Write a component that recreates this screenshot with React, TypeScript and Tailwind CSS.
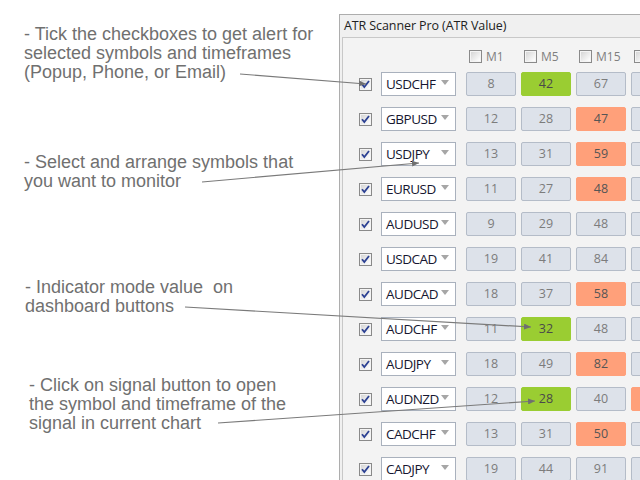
import { Fragment } from 'react';

type Tone = 'gray' | 'green' | 'salmon';

interface Row {
  symbol: string;
  cells: [number | null, Tone][];
}

// last column is cut off by the window edge, only its colour shows
const rows: Row[] = [
  { symbol: 'USDCHF', cells: [[8, 'gray'], [42, 'green'], [67, 'gray'], [null, 'gray']] },
  { symbol: 'GBPUSD', cells: [[12, 'gray'], [28, 'gray'], [47, 'salmon'], [null, 'gray']] },
  { symbol: 'USDJPY', cells: [[13, 'gray'], [31, 'gray'], [59, 'salmon'], [null, 'gray']] },
  { symbol: 'EURUSD', cells: [[11, 'gray'], [27, 'gray'], [48, 'salmon'], [null, 'gray']] },
  { symbol: 'AUDUSD', cells: [[9, 'gray'], [29, 'gray'], [48, 'gray'], [null, 'gray']] },
  { symbol: 'USDCAD', cells: [[19, 'gray'], [41, 'gray'], [84, 'gray'], [null, 'gray']] },
  { symbol: 'AUDCAD', cells: [[18, 'gray'], [37, 'gray'], [58, 'salmon'], [null, 'gray']] },
  { symbol: 'AUDCHF', cells: [[11, 'gray'], [32, 'green'], [48, 'gray'], [null, 'gray']] },
  { symbol: 'AUDJPY', cells: [[18, 'gray'], [49, 'gray'], [82, 'salmon'], [null, 'gray']] },
  { symbol: 'AUDNZD', cells: [[12, 'gray'], [28, 'green'], [40, 'gray'], [null, 'salmon']] },
  { symbol: 'CADCHF', cells: [[13, 'gray'], [31, 'gray'], [50, 'salmon'], [null, 'gray']] },
  { symbol: 'CADJPY', cells: [[19, 'gray'], [44, 'gray'], [91, 'gray'], [null, 'gray']] },
];

const toneClass: Record<Tone, string> = {
  gray: 'bg-[#dde2ea] border-[#b4bcc8] text-[#7c7c7c]',
  green: 'bg-[#9acd32] border-[#9acd32] text-[#4a4a4a]',
  salmon: 'bg-[#ffa07a] border-[#ffa07a] text-[#555555]',
};

function CheckBox({ checked }: { checked: boolean }) {
  return (
    <svg width="13" height="13" viewBox="0 0 13 13" className="shrink-0">
      <defs>
        <linearGradient id="cbg" x1="0" y1="0" x2="1" y2="1">
          <stop offset="0" stopColor="#d6d6d6" />
          <stop offset="1" stopColor="#ffffff" />
        </linearGradient>
      </defs>
      <rect x="0.5" y="0.5" width="12" height="12" fill="#f4f4f4" stroke="#8a8a8a" />
      <rect x="2" y="2" width="9" height="9" fill="url(#cbg)" />
      {checked && (
        <path d="M3 6.2 L5.3 9 L10 3" fill="none" stroke="#2c4193" strokeWidth="1.8" />
      )}
    </svg>
  );
}

function Annotation({ lines, className }: { lines: string[]; className: string }) {
  return (
    <div className={className}>
      {lines.map((l) => (
        <div key={l} className="whitespace-pre">{l}</div>
      ))}
    </div>
  );
}

export default function App() {
  const arrows = [
    [240, 74, 366, 84],
    [202, 182, 419, 163],
    [185, 307, 531, 327],
    [218, 423, 535, 401],
  ];

  return (
    <div className="relative w-[640px] h-[480px] overflow-hidden bg-white flex">
      {/* callouts */}
      <div className="w-[339px] shrink-0 pt-[25px] pl-[24px] text-[18px] leading-[19px] text-[#707070] font-['Liberation_Sans',Arial,sans-serif]">
        <Annotation
          lines={['- Tick the checkboxes to get alert for', 'selected symbols and timeframes', '(Popup, Phone, or Email)']}
          className=""
        />
        <Annotation lines={['- Select and arrange symbols that', 'you want to monitor']} className="mt-[71px]" />
        <Annotation lines={['- Indicator mode value  on', 'dashboard buttons']} className="mt-[87px] pl-[1px]" />
        <Annotation
          lines={['- Click on signal button to open', 'the symbol and timeframe of the', 'signal in current chart']}
          className="mt-[60px] pl-[5px]"
        />
      </div>

      {/* scanner window */}
      <div className="shrink-0 w-[330px] h-[480px] mt-[14px] border border-[#adadad] bg-[#f0f0f0] flex flex-col font-['Open_Sans','Noto_Sans',sans-serif]">
        <div className="h-[22px] pl-[4px] flex items-center text-[12.5px] text-[#222222] tracking-[-0.1px]">
          ATR Scanner Pro (ATR Value)
        </div>
        <div className="flex-1 ml-[2px] border-l border-t border-[#c8c8c8] bg-[#f3f3f3] pt-[12px]">
          <div className="flex h-[13px] items-center pl-[123px]">
            {['M1', 'M5', 'M15', ''].map((tf) => (
              <div key={tf} className="w-[55px] shrink-0 flex items-center gap-[4px] pl-[3px] text-[12px] text-[#7f7f7f]">
                <CheckBox checked={false} />
                {tf && <span>{tf}</span>}
              </div>
            ))}
          </div>
          <div className="mt-[9px] flex flex-col gap-[11px]">
            {rows.map((r) => (
              <div key={r.symbol} className="flex items-center h-[24px] pl-[16px]">
                <CheckBox checked />
                <div className="ml-[9px] w-[75px] h-[24px] shrink-0 bg-white border border-[#a9b1bd] flex items-center justify-between pl-[4px] pr-[6px]">
                  <span className="text-[13.5px] text-[#161630] tracking-[-0.5px]">{r.symbol}</span>
                  <svg width="8" height="5" viewBox="0 0 8 5" className="mb-[3px]">
                    <path d="M0 0 L8 0 L4 5 Z" fill="#a6a6a6" />
                  </svg>
                </div>
                <div className="ml-[10px] flex gap-[5px]">
                  {r.cells.map(([v, tone], i) => (
                    <Fragment key={i}>
                      <div
                        className={`w-[50px] h-[24px] shrink-0 border rounded-[2px] flex items-center justify-center text-[12.5px] ${toneClass[tone]}`}
                      >
                        {v}
                      </div>
                    </Fragment>
                  ))}
                </div>
              </div>
            ))}
          </div>
        </div>
      </div>

      {/* pointer lines */}
      <svg className="absolute inset-0 pointer-events-none" width="640" height="480">
        <defs>
          <marker id="head" markerWidth="7" markerHeight="6" refX="7" refY="3" orient="auto" markerUnits="userSpaceOnUse">
            <path d="M0 0 L7 3 L0 6 Z" fill="#6f6f6f" />
          </marker>
        </defs>
        {arrows.map(([x1, y1, x2, y2], i) => (
          <line key={i} x1={x1} y1={y1} x2={x2} y2={y2} stroke="#7a7a7a" strokeWidth="1.2" markerEnd="url(#head)" />
        ))}
      </svg>
    </div>
  );
}
